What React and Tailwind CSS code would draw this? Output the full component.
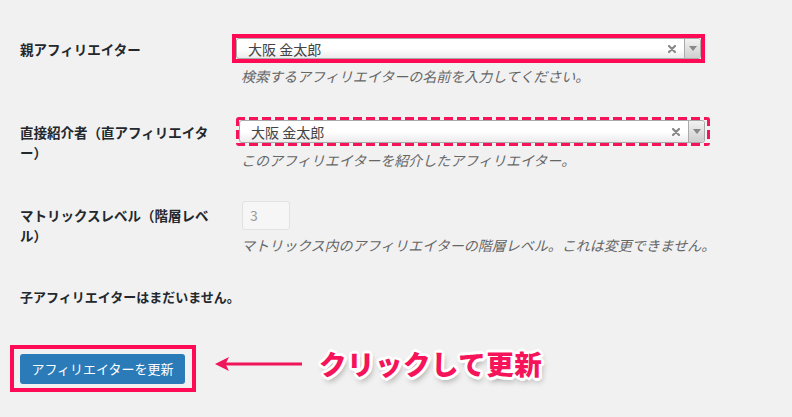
import React from "react";

const jp = { fontFamily: '"Noto Sans CJK JP", "Noto Sans", sans-serif' };

function Select2({ h }) {
  return (
    <div
      className={`flex w-full items-center rounded-[3px] border border-[#aaa] bg-gradient-to-b from-white from-50% to-[#ececec] ${h}`}
    >
      <span className="flex-1 pl-[11px] text-[14px] leading-none text-[#444]">大阪 金太郎</span>
      <svg width="8" height="8" viewBox="0 0 8 8" className="mr-[8px]">
        <path d="M1 1 L7 7 M7 1 L1 7" stroke="#888" strokeWidth="2.2" strokeLinecap="round" />
      </svg>
      <span className="flex h-full w-[16px] items-center justify-center rounded-r-[3px] border-l border-[#aaa] bg-gradient-to-b from-[#f2f2f2] to-[#cfcfcf]">
        <span className="h-0 w-0 border-x-[4px] border-t-[5px] border-x-transparent border-t-[#888]" />
      </span>
    </div>
  );
}

export default function App() {
  return (
    <div className="h-[417px] w-full overflow-hidden bg-[#f1f1f1] pl-[20px] pt-[34px] text-[#23282d]" style={jp}>
      {/* Row 1 */}
      <div className="flex">
        <div className="w-[212px] pt-[5px] text-[13.5px] font-bold leading-[20px]">親アフィリエイター</div>
        <div className="flex w-[540px] flex-col">
          <div className="w-[473px] border-4 border-[#ff0a55]">
            <Select2 h="h-[21px]" />
          </div>
          <p className="ml-[9px] mt-[3px] text-[14px] italic leading-[20px] text-[#666]">
            検索するアフィリエイターの名前を入力してください。
          </p>
        </div>
      </div>

      {/* Row 2 */}
      <div className="mt-[31px] flex">
        <div className="w-[212px] pt-[5px] pr-[16px] text-[13.5px] font-bold leading-[20px]">
          直接紹介者（直アフィリエイター）
        </div>
        <div className="flex w-[540px] flex-col">
          <div className="ml-[4px] w-[474px] rounded-[3px] p-[3px] pr-[5px] [background:repeating-linear-gradient(90deg,#f5145a_0_9px,transparent_9px_13px)_top/100%_3px_no-repeat,repeating-linear-gradient(90deg,#f5145a_0_9px,transparent_9px_13px)_bottom/100%_3px_no-repeat,repeating-linear-gradient(180deg,#f5145a_0_9px,transparent_9px_13px)_left/3px_100%_no-repeat,repeating-linear-gradient(180deg,#f5145a_0_9px,transparent_9px_13px)_right/3px_100%_no-repeat]">
            <Select2 h="h-[23px]" />
          </div>
          <p className="ml-[9px] mt-[4px] text-[14px] italic leading-[20px] text-[#666]">
            このアフィリエイターを紹介したアフィリエイター。
          </p>
        </div>
      </div>

      {/* Row 3 */}
      <div className="mt-[31px] flex">
        <div className="w-[212px] pt-[4px] pr-[16px] text-[13.5px] font-bold leading-[20px]">
          マトリックスレベル（階層レベル）
        </div>
        <div className="flex w-[540px] flex-col">
          <div className="ml-[10px] flex h-[29px] w-[48px] items-center rounded-[3px] border border-[#e2e2e2] bg-[#f6f6f6] pl-[7px] text-[14px] text-[#999]">
            3
          </div>
          <p className="ml-[9px] mt-[5px] whitespace-nowrap text-[14px] italic leading-[20px] text-[#666]">
            マトリックス内のアフィリエイターの階層レベル。これは変更できません。
          </p>
        </div>
      </div>

      <p className="mt-[32px] text-[13px] font-bold leading-[20px]">子アフィリエイターはまだいません。</p>

      {/* Button row */}
      <div className="mt-[38px] -ml-[10px] flex items-center">
        <div className="border-4 border-[#ff0a55] pb-[4px] pl-[6px] pr-[7px] pt-[5px]">
          <button className="flex h-[30px] w-[165px] items-center justify-center rounded-[3px] bg-[#2b7bb9] text-[13px] text-white">
            アフィリエイターを更新
          </button>
        </div>
        <div className="mb-[10px] ml-[19px] flex items-center">
          <svg width="88" height="16" viewBox="0 0 88 16">
            <path d="M10 6.5 H87 V9.5 H10 Z" fill="#f0145a" />
            <path d="M0 8 L14 1 L10.5 8 L14 15 Z" fill="#f0145a" />
          </svg>
          <span
            className="ml-[16px] text-[27.5px] font-black leading-none tracking-[0.5px] text-[#f5145a] [text-shadow:2px_0_0_#fff,-2px_0_0_#fff,0_2px_0_#fff,0_-2px_0_#fff,2px_2px_0_#fff,-2px_-2px_0_#fff,2px_-2px_0_#fff,-2px_2px_0_#fff,3px_0_0_#fff,-3px_0_0_#fff,0_3px_0_#fff,0_-3px_0_#fff,3px_1px_0_#fff,1px_3px_0_#fff,2px_4px_6px_rgba(0,0,0,0.4)]"
          >
            クリックして更新
          </span>
        </div>
      </div>
    </div>
  );
}
